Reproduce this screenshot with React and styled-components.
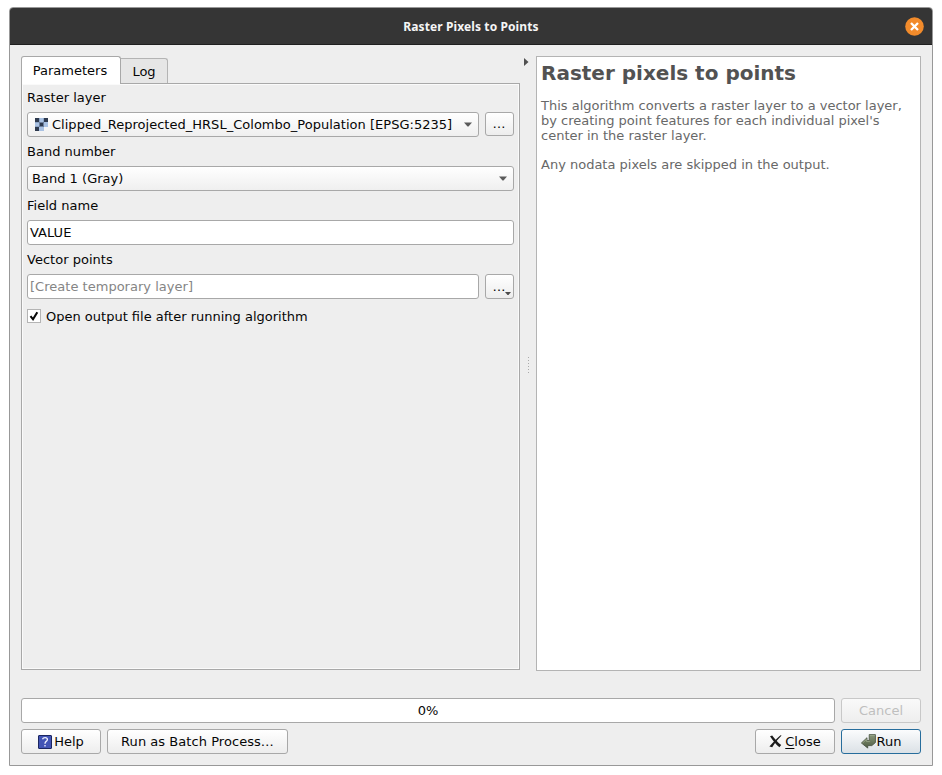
import React from "react";
import styled, { createGlobalStyle, css } from "styled-components";

const GlobalStyle = createGlobalStyle`
  * { box-sizing: border-box; }
  body { margin: 0; background: #fff; overflow: hidden; }
`;

const Desktop = styled.div`
  width: 942px;
  height: 775px;
  padding: 7px 0 0 9px;
  background: #fff;
  color: #060606;
  font: 13px/16px "DejaVu Sans", sans-serif;
  white-space: nowrap;
`;

const Dialog = styled.div`
  display: flex;
  flex-direction: column;
  width: 924px;
  height: 759px;
  border: 1px solid #989898;
  border-radius: 4px 4px 0 0;
  background: #eeeeee;
  overflow: hidden;
`;

const TitleBar = styled.header`
  display: grid;
  grid-template-columns: 1fr auto 1fr;
  align-items: center;
  flex: none;
  height: 37px;
  padding: 0 8px 0 8px;
  border-bottom: 1px solid #1f1f1f;
  background: #353535;
`;

const Title = styled.h1`
  grid-column: 2;
  margin: 0;
  padding-top: 1px;
  color: #f5f5f5;
  font: 700 12px/18px "Noto Sans", sans-serif;
  letter-spacing: 0.1px;
`;

const CloseWindow = styled.button`
  display: flex;
  justify-self: end;
  padding: 0;
  border: 0;
  background: none;
`;

const Body = styled.main`
  display: flex;
  flex-direction: column;
  flex: 1;
  padding: 11px;
`;

const Columns = styled.div`
  display: flex;
  height: 615px;
  margin-bottom: 27px;
`;

const TabWidget = styled.section`
  display: flex;
  flex-direction: column;
  width: 499px;
  height: 614px;
`;

const TabBar = styled.div`
  display: flex;
  align-items: flex-end;
  height: 28px;
  margin-bottom: -1px;
`;

const Tab = styled.div`
  display: flex;
  align-items: center;
  justify-content: center;
  border: 1px solid #b4b4b4;
  ${(p) =>
    p.$active
      ? css`
          z-index: 1;
          width: 100px;
          height: 28px;
          padding-right: 2px;
          border-color: #a8a8a8;
          border-bottom: 0;
          border-radius: 3px 3px 0 0;
          background: #fff;
        `
      : css`
          width: 48px;
          height: 26px;
          margin-left: -1px;
          padding-top: 1px;
          border-bottom-color: #a8a8a8;
          border-radius: 0 3px 0 0;
          background: #e6e6e6;
        `}
`;

const Pane = styled.div`
  flex: 1;
  padding: 5px 4px;
  border: 1px solid #a8a8a8;
  box-shadow: inset 0 0 0 1px #fafafa;
`;

const Field = styled.div`
  display: flex;
  flex-direction: column;
  gap: 6px;
  height: 54px;
  padding: 1px 1px 0;
  letter-spacing: 0.02px;
`;

const Line = styled.div`
  display: flex;
  gap: 6px;
`;

const control = css`
  display: flex;
  align-items: center;
  height: 25px;
  border: 1px solid #a8a8a8;
  border-radius: 3px;
`;

const Select = styled.div`
  ${control}
  flex: 1;
  padding: 0 6px 0 ${(p) => (p.$icon ? "7px" : "4px")};
  background: linear-gradient(#fff, #efefef);
`;

const SelectText = styled.span`
  flex: 1;
  margin-left: ${(p) => (p.$icon ? "4px" : 0)};
`;

const Input = styled.div`
  ${control}
  flex: 1;
  padding-left: 2px;
  background: #fff;
  color: ${(p) => (p.$placeholder ? "#858585" : "#060606")};
`;

const MoreButton = styled.button`
  ${control}
  position: relative;
  justify-content: center;
  width: 29px;
  height: ${(p) => p.$height || 25}px;
  padding: 0 1px 0 0;
  background: linear-gradient(#fff, #ededed);
  color: #060606;
  font: inherit;
`;

const MenuArrow = styled.svg`
  position: absolute;
  right: 2px;
  bottom: 3px;
`;

const CheckRow = styled.div`
  display: flex;
  align-items: center;
  gap: 5px;
  height: 22px;
  padding-left: 1px;
`;

const CheckLabel = styled.span`
  padding-top: 2px;
`;

const CheckBox = styled.span`
  display: flex;
  width: 14px;
  height: 14px;
  border: 1px solid #b4b4b4;
  background: #fff;
`;

const Splitter = styled.div`
  display: flex;
  flex-direction: column;
  width: 16px;
`;

const CollapseArrow = styled.svg`
  margin: 2px 0 0 4px;
`;

const Grip = styled.svg`
  margin: 291px 0 0 7px;
`;

const HelpPanel = styled.aside`
  flex: 1;
  height: 615px;
  padding: 4px;
  border: 1px solid #b4b4b4;
  background: #fff;
  color: #686868;
`;

const HelpHeading = styled.h2`
  margin: 0 0 13px;
  color: #525252;
  font-size: 20px;
  font-weight: 700;
  line-height: 24px;
`;

const HelpText = styled.p`
  margin: 0 0 14px;
  line-height: 15px;
`;

const Footer = styled.footer`
  display: grid;
  grid-template-columns: 1fr 80px;
  gap: 6px;
`;

const Progress = styled.div`
  ${control}
  justify-content: center;
  background: #fff;
`;

const ButtonRow = styled.div`
  display: flex;
  gap: 6px;
`;

const Button = styled.button`
  ${control}
  justify-content: center;
  gap: ${(p) => p.$gap || 0}px;
  width: ${(p) => p.$width || 80}px;
  padding: 0;
  background: linear-gradient(#fff, #ededed);
  color: #060606;
  font: inherit;
  letter-spacing: ${(p) => p.$tracking || 0}px;
  ${(p) =>
    p.$disabled &&
    css`
      border-color: #c8c8c8;
      background: linear-gradient(#f9f9f9, #eeeeee);
      color: #bfbfbf;
    `}
  ${(p) =>
    p.$primary &&
    css`
      border-color: #276d9c;
      background: linear-gradient(#fbfcfd, #dbe1e6);
    `}
`;

const Spacer = styled.span`
  flex: 1;
`;

const Mnemonic = styled.span`
  text-decoration: underline;
  text-decoration-thickness: 1px;
  text-underline-offset: 2px;
`;

const DownArrow = () => (
  <svg width="8" height="5" viewBox="0 0 8 5">
    <path d="M0 .5h8L4.5 4.5h-1z" fill="#5a5a5a" />
  </svg>
);

const RasterIcon = () => (
  <svg width="13" height="13" viewBox="0 0 13 13" shapeRendering="crispEdges">
    <path d="M0 0h13v9H9v4H0z" fill="#a9c1e2" />
    <path d="M0 0h4v4H0zM9 0h4v4H9zM0 9h4v4H0z" fill="#2e3a4e" />
    <path d="M4 4h5v5H4z" fill="#6d7f9b" />
    <path d="M5 5h3v3H5z" fill="#2e3a4e" />
    <path d="M4 0h1v4H4zM8 0h1v4H8zM0 4h4v1H0zM0 8h4v1H0z" fill="#8da5c6" />
  </svg>
);

const HelpIcon = () => (
  <svg width="14" height="14" viewBox="0 0 14 14">
    <rect x=".5" y=".5" width="13" height="13" rx=".5" fill="#4254b5" stroke="#1b2660" />
    <path
      d="M4.5 4.3Q5 2.7 7.1 2.7q2.3 0 2.3 1.9 0 1-1.2 1.8Q7 7.2 7 8.7M7 10v1.5"
      fill="none"
      stroke="#f4f5ff"
      strokeWidth="1.3"
    />
  </svg>
);

const CrossIcon = () => (
  <svg width="13" height="13" viewBox="0 0 13 13">
    <path d="M1 1.2 3.2.4C5.6 3.6 8.8 7.3 12.2 10L10.4 12.3C7 9.3 3.6 5.4 1 1.2z" fill="#1c1c1c" />
    <path d="M11.5.2 12.6.6C8.6 4.6 5.8 8.2 3.2 12.3L.4 11.6C4 7.3 7.2 3.7 11.5.2z" fill="#1c1c1c" />
  </svg>
);

const RunIcon = () => (
  <svg width="16" height="16" viewBox="0 0 16 16">
    <defs>
      <linearGradient id="run" x1="0" y1="0" x2="0" y2="1">
        <stop offset="0" stopColor="#8a987a" />
        <stop offset="1" stopColor="#4f5d45" />
      </linearGradient>
    </defs>
    <path d="M2.5 10.5 7.5 15v-3H11l4-4V1.5" fill="#c5cacc" />
    <path d="M8.2.6h6.2v8l-3.6 3H6.6V14L.4 9l5.6-5.3v2.9h2.2z" fill="url(#run)" stroke="#465040" strokeWidth=".8" />
    <path d="M8.8 1.4h5M1.6 9l3.8-3.6v2h3.4" fill="none" stroke="#a5b194" strokeWidth=".7" />
  </svg>
);

const fields = {
  layer: "Clipped_Reprojected_HRSL_Colombo_Population [EPSG:5235]",
  band: "Band 1 (Gray)",
};

export default function App() {
  return (
    <Desktop>
      <GlobalStyle />
      <Dialog>
        <TitleBar>
          <Title>Raster Pixels to Points</Title>
          <CloseWindow aria-label="Close window">
            <svg width="19" height="19" viewBox="0 0 19 19">
              <circle cx="9.5" cy="9.5" r="9.3" fill="#f28b2b" />
              <path d="m6 6 7 7m0-7-7 7" stroke="#fff" strokeWidth="2.3" />
            </svg>
          </CloseWindow>
        </TitleBar>
        <Body>
          <Columns>
            <TabWidget>
              <TabBar>
                <Tab $active>Parameters</Tab>
                <Tab>Log</Tab>
              </TabBar>
              <Pane>
                <Field>
                  <label>Raster layer</label>
                  <Line>
                    <Select $icon>
                      <RasterIcon />
                      <SelectText $icon>{fields.layer}</SelectText>
                      <DownArrow />
                    </Select>
                    <MoreButton $height={24}>…</MoreButton>
                  </Line>
                </Field>
                <Field>
                  <label>Band number</label>
                  <Line>
                    <Select>
                      <SelectText>{fields.band}</SelectText>
                      <DownArrow />
                    </Select>
                  </Line>
                </Field>
                <Field>
                  <label>Field name</label>
                  <Line>
                    <Input>VALUE</Input>
                  </Line>
                </Field>
                <Field>
                  <label>Vector points</label>
                  <Line>
                    <Input $placeholder>[Create temporary layer]</Input>
                    <MoreButton>
                      …
                      <MenuArrow width="6" height="3" viewBox="0 0 6 3">
                        <path d="M0 0h6L3.5 3h-1z" fill="#4c4c4c" />
                      </MenuArrow>
                    </MoreButton>
                  </Line>
                </Field>
                <CheckRow>
                  <CheckBox>
                    <svg width="12" height="12" viewBox="0 0 12 12">
                      <path d="M2.5 6.2 5 9.3 9.3 2.2" fill="none" stroke="#080808" strokeWidth="2.1" />
                    </svg>
                  </CheckBox>
                  <CheckLabel>Open output file after running algorithm</CheckLabel>
                </CheckRow>
              </Pane>
            </TabWidget>
            <Splitter>
              <CollapseArrow width="5" height="8" viewBox="0 0 5 8">
                <path d="M0 0 4.5 4 0 8z" fill="#505050" />
              </CollapseArrow>
              <Grip width="3" height="18" viewBox="0 0 3 18">
                <path d="M1.5 0v18" stroke="#aaa" strokeDasharray="1 2" />
              </Grip>
            </Splitter>
            <HelpPanel>
              <HelpHeading>Raster pixels to points</HelpHeading>
              <HelpText>
                This algorithm converts a raster layer to a vector layer,
                <br />
                by creating point features for each individual pixel's
                <br />
                center in the raster layer.
              </HelpText>
              <HelpText>Any nodata pixels are skipped in the output.</HelpText>
            </HelpPanel>
          </Columns>
          <Footer>
            <Progress>0%</Progress>
            <Button $disabled>Cancel</Button>
            <ButtonRow>
              <Button $gap={2}>
                <HelpIcon />
                Help
              </Button>
              <Button $width={181} $tracking={0.05}>
                Run as Batch Process…
              </Button>
              <Spacer />
              <Button $gap={3}>
                <CrossIcon />
                <span>
                  <Mnemonic>C</Mnemonic>lose
                </span>
              </Button>
            </ButtonRow>
            <Button $primary>
              <RunIcon />
              Run
            </Button>
          </Footer>
        </Body>
      </Dialog>
    </Desktop>
  );
}
